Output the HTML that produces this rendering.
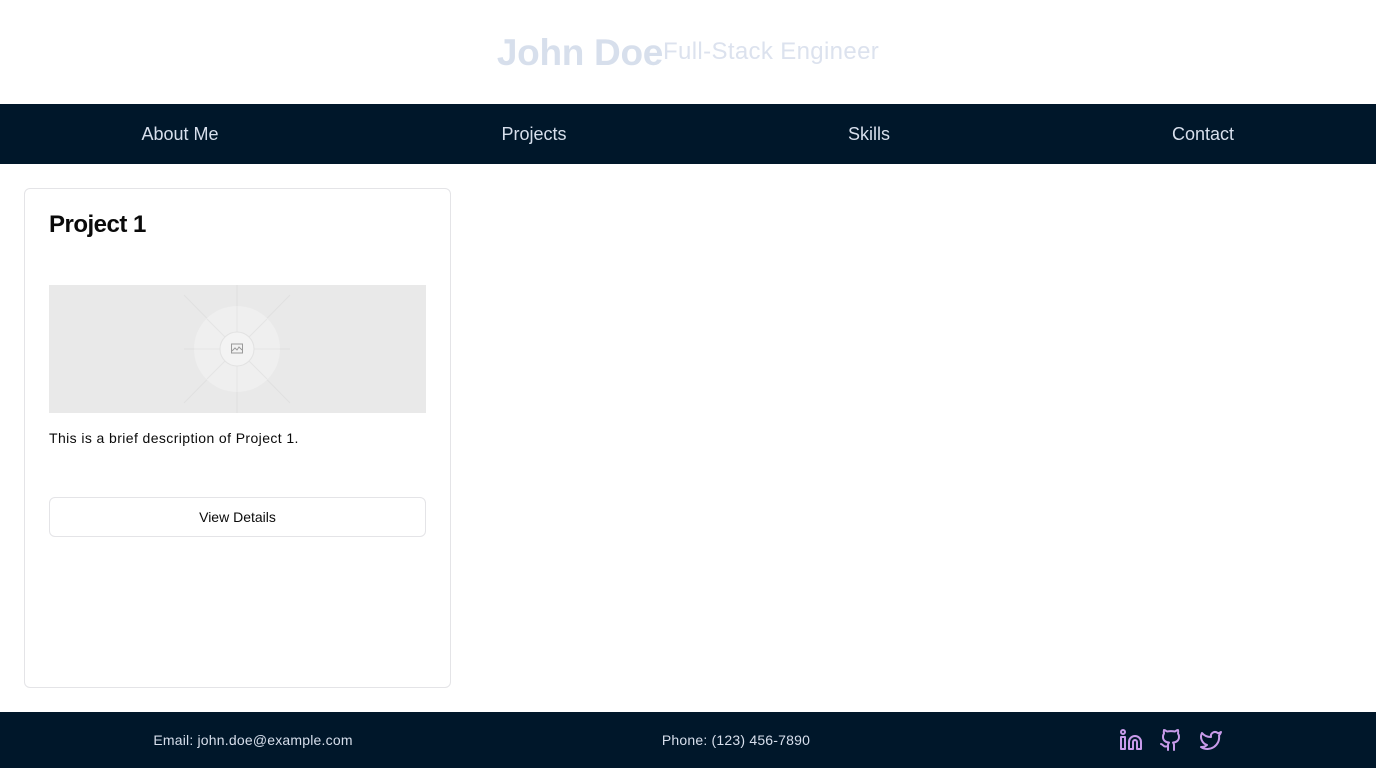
<!DOCTYPE html>
<html><head><meta charset="utf-8"><style>
*{box-sizing:border-box;margin:0;padding:0}
body{width:1376px;height:768px;font-family:"Liberation Sans",sans-serif;background:#fff;position:relative;overflow:hidden}
header{height:104px;display:flex;justify-content:center;align-items:center}
header h1{font-size:37px;font-weight:bold;color:#d7dfec;letter-spacing:-0.3px;margin-top:1px}
header span{font-size:24px;color:#dce2ee;margin-top:-1px;letter-spacing:0.35px}
nav{height:60px;background:#00172a;display:flex;align-items:center}
nav a{position:absolute;color:#d7dfec;font-size:18px;text-decoration:none;transform:translateX(-50%)}
.card{position:absolute;left:24px;top:188px;width:427px;height:500px;border:1px solid #e4e4e7;border-radius:6px;padding:22px 24px}
.card h2{font-size:24px;font-weight:bold;color:#0a0a0a;margin-top:0;letter-spacing:-0.5px}
.img{position:absolute;left:24px;top:96px;width:377px;height:128px;background:#e9e9e9;overflow:hidden}
.desc{position:absolute;left:24px;top:241px;font-size:14px;color:#0a0a0a;letter-spacing:0.4px}
.btn{position:absolute;left:24px;top:308px;width:377px;height:40px;border:1px solid #e4e4e7;border-radius:6px;display:flex;align-items:center;justify-content:center;font-size:14px;color:#0a0a0a}
footer{position:absolute;left:0;top:712px;width:1376px;height:56px;background:#00172a;color:#d7dfec;font-size:14px}
footer .t{position:absolute;top:20px;transform:translateX(-50%);letter-spacing:0.2px}
.ic{position:absolute;top:16px;width:24px;height:24px}
</style></head><body>
<header><h1>John Doe</h1><span>Full-Stack Engineer</span></header>
<nav><a style="left:180px">About Me</a><a style="left:534px">Projects</a><a style="left:869px">Skills</a><a style="left:1203px">Contact</a></nav>
<div class="card">
<h2>Project 1</h2>
<div class="img"><svg width="377" height="128" viewBox="0 0 377 128">
<g stroke="#e0e0e0" stroke-width="1" fill="none">
<line x1="188" y1="0" x2="188" y2="128"/><line x1="135" y1="64" x2="241" y2="64"/>
<line x1="135" y1="10" x2="241" y2="118"/><line x1="241" y1="10" x2="135" y2="118"/>
</g>
<circle cx="188" cy="64" r="43" fill="#efefef"/>
<g stroke="#e4e4e4" stroke-width="1"><line x1="188" y1="21" x2="188" y2="107"/><line x1="145" y1="64" x2="231" y2="64"/><line x1="158" y1="34" x2="218" y2="94"/><line x1="218" y1="34" x2="158" y2="94"/></g>
<circle cx="188" cy="64" r="17" fill="#f3f3f3" stroke="#e2e2e2"/>
<rect x="182.5" y="59" width="11" height="9" fill="none" stroke="#9a9a9a" stroke-width="1"/>
<path d="M183 66l3-3 2 2 2-3 3 3" fill="none" stroke="#9a9a9a" stroke-width="1"/>
</svg></div>
<p class="desc">This is a brief description of Project 1.</p>
<div class="btn">View Details</div>
</div>
<footer>
<span class="t" style="left:253px">Email: john.doe@example.com</span>
<span class="t" style="left:736px">Phone: (123) 456-7890</span>
<svg class="ic" style="left:1119px" viewBox="0 0 24 24" fill="none" stroke="#c89bea" stroke-width="2" stroke-linecap="round" stroke-linejoin="round"><path d="M16 8a6 6 0 0 1 6 6v7h-4v-7a2 2 0 0 0-4 0v7h-4v-7a6 6 0 0 1 6-6z"/><rect x="2" y="9" width="4" height="12"/><circle cx="4" cy="4" r="2"/></svg>
<svg class="ic" style="left:1159px" viewBox="0 0 24 24" fill="none" stroke="#c89bea" stroke-width="2" stroke-linecap="round" stroke-linejoin="round"><path d="M15 22v-4a4.8 4.8 0 0 0-1-3.5c3 0 6-2 6-5.5.08-1.25-.27-2.48-1-3.5.28-1.15.28-2.35 0-3.5 0 0-1 0-3 1.5-2.64-.5-5.36-.5-8 0C6 2 5 2 5 2c-.3 1.15-.3 2.35 0 3.5A5.4 5.4 0 0 0 4 9c0 3.5 3 5.5 6 5.5-.39.49-.68 1.05-.85 1.650-.17.6-.22 1.23-.15 1.85v4"/><path d="M9 18c-4.51 2-5-2-7-2"/></svg>
<svg class="ic" style="left:1199px" viewBox="0 0 24 24" fill="none" stroke="#c89bea" stroke-width="2" stroke-linecap="round" stroke-linejoin="round"><path d="M22 4s-.7 2.1-2 3.4c1.6 10-9.4 17.3-18 11.6 2.2.1 4.4-.6 6-2C3 15.5.5 9.6 3 5c2.2 2.6 5.6 4.1 9 4-.9-4.2 4-6.6 7-3.8 1.1 0 3-1.2 3-1.2z"/></svg>
</footer>
</body></html>
